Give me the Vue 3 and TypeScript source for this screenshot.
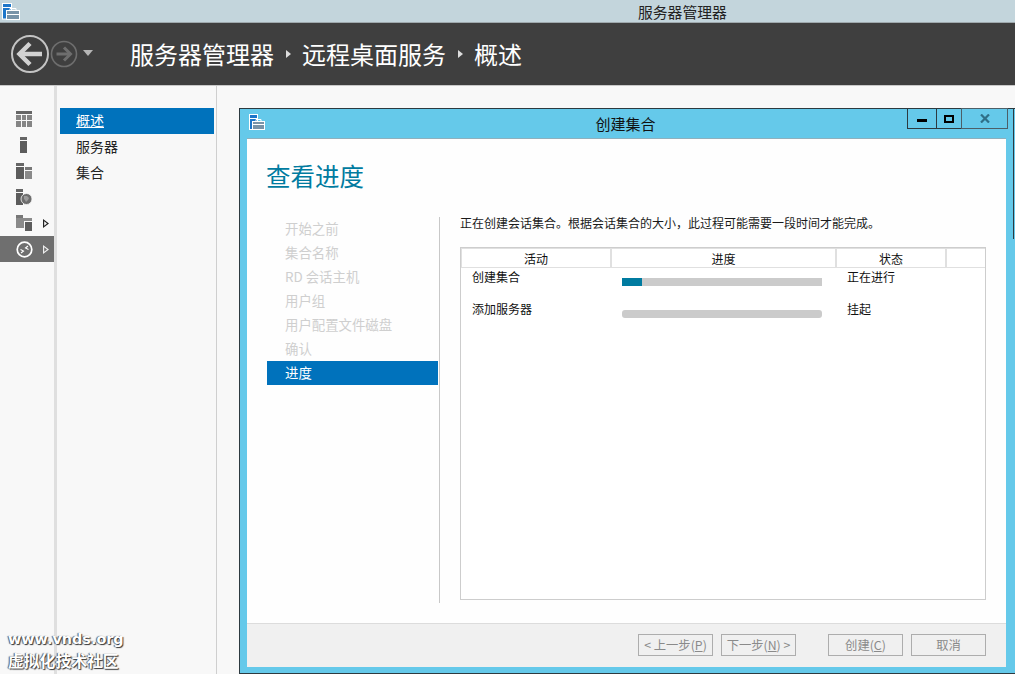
<script setup lang="ts">
const steps = ['开始之前', '集合名称', 'RD 会话主机', '用户组', '用户配置文件磁盘', '确认']
const rows = [
  { name: '创建集合', value: 10, state: '正在进行' },
  { name: '添加服务器', value: 0, state: '挂起' },
]
</script>

<template>
  <div class="app">
    <div class="titlebar">
      <svg class="appicon" width="18" height="17" viewBox="0 0 18 17">
        <rect x="0.500" y="0.500" width="9" height="15.500" fill="#1d76c9" stroke="#fff" />
        <rect x="1" y="4" width="8" height="1" fill="#fff" />
        <rect x="4.500" y="7.500" width="13" height="9" fill="#7893a8" stroke="#fff" />
        <path d="M8 7.500V5.500h6v2" fill="none" stroke="#fff" />
        <rect x="5" y="11" width="12" height="1" fill="#fff" />
      </svg>
      <span class="wintitle">服务器管理器</span>
    </div>

    <header class="header">
      <div class="navbtns">
        <svg class="back" width="40" height="40" viewBox="0 0 40 40">
          <circle cx="20" cy="20" r="18" fill="none" stroke="#c4c4c4" stroke-width="2" />
          <path d="M10 20h22" stroke="#d2d2d2" stroke-width="4.500" />
          <path d="M20 9.500 9.500 20 20 30.500" fill="none" stroke="#d2d2d2" stroke-width="4.500" />
        </svg>
        <svg class="fwd" width="28" height="28" viewBox="0 0 28 28">
          <circle cx="14" cy="14" r="12.500" fill="none" stroke="#6e6e6e" stroke-width="1.600" />
          <path d="M6.500 14h13" stroke="#6e6e6e" stroke-width="3" />
          <path d="M14 7.500l6.500 6.500-6.500 6.500" fill="none" stroke="#6e6e6e" stroke-width="3" />
        </svg>
        <span class="caret"></span>
      </div>
      <nav class="crumbs">
        <span>服务器管理器</span><i></i><span>远程桌面服务</span><i></i><span>概述</span>
      </nav>
    </header>

    <div class="body">
      <aside class="rail">
        <div class="railitem">
          <svg width="16" height="16" viewBox="0 0 16 16">
            <rect width="16" height="3" fill="#666" />
            <path d="M0 4h5v5H0zM6 4h4v5H6zM11 4h5v5h-5zM0 10h5v6H0zM6 10h4v6H6zM11 10h5v6h-5z" fill="#858585" />
          </svg>
        </div>
        <div class="railitem">
          <svg width="16" height="16" viewBox="0 0 16 16">
            <rect x="4" y="0" width="7" height="3" fill="#666" />
            <rect x="4" y="4" width="7" height="12" fill="#5c5c5c" />
          </svg>
        </div>
        <div class="railitem">
          <svg width="16" height="16" viewBox="0 0 16 16">
            <rect width="8" height="3" fill="#666" />
            <rect y="4" width="8" height="12" fill="#5c5c5c" />
            <rect x="9" y="4" width="7" height="3" fill="#777" />
            <rect x="9" y="8" width="7" height="8" fill="#8a8a8a" />
          </svg>
        </div>
        <div class="railitem">
          <svg width="16" height="16" viewBox="0 0 16 16">
            <rect width="7" height="3" fill="#666" />
            <rect y="4" width="7" height="12" fill="#5c5c5c" />
            <circle cx="10.500" cy="10" r="5.500" fill="#6d6d6d" stroke="#f8f8f8" stroke-width=".8" />
            <path d="M8 7h3l2 2-1 2-2 2-1-2-1-1z" fill="#9a9a9a" />
          </svg>
        </div>
        <div class="railitem has-arrow">
          <svg width="16" height="16" viewBox="0 0 16 16">
            <rect width="7" height="3" fill="#777" />
            <rect y="3" width="16" height="10" fill="#8a8a8a" />
            <rect x="8.500" y="6.500" width="8" height="10" fill="#5c5c5c" stroke="#f8f8f8" />
          </svg>
          <span class="tri"></span>
        </div>
        <div class="railitem has-arrow active">
          <svg width="17" height="17" viewBox="0 0 17 17">
            <circle cx="8.500" cy="8.500" r="7.300" fill="none" stroke="#fff" stroke-width="1.700" />
            <path d="M4.500 8.500 7.500 10 5 12M12.500 8.500 9.500 7 12 5" fill="none" stroke="#fff" stroke-width="1.100" />
          </svg>
          <span class="tri"></span>
        </div>
      </aside>

      <div class="splitter"></div>

      <nav class="subnav">
        <div class="subitem current"><u>概述</u></div>
        <div class="subitem">服务器</div>
        <div class="subitem">集合</div>
      </nav>

      <main class="content">
        <section class="dialog">
          <div class="dlgbar">
            <svg class="dlgicon" width="16" height="16" viewBox="0 0 16 16">
              <rect x="0.500" y="0.500" width="8" height="15" fill="#1d76c9" stroke="#fff" />
              <rect x="1" y="4" width="7" height="1" fill="#fff" />
              <rect x="3.500" y="7.500" width="12" height="8" fill="#7893a8" stroke="#fff" />
              <path d="M7 7.500V5.500h5v2" fill="none" stroke="#fff" />
              <rect x="4" y="10" width="11" height="1" fill="#fff" />
            </svg>
            <span class="dlgtitle">创建集合</span>
            <div class="winbtns">
              <button class="wb min"><span></span></button>
              <button class="wb max"><span></span></button>
              <button class="wb close">
                <svg width="10" height="9" viewBox="0 0 10 9"><path d="M1 .5l8 8M9 .5l-8 8" stroke="#2f6f88" stroke-width="2.200" fill="none" /></svg>
              </button>
            </div>
          </div>

          <div class="dlgbody">
            <div class="dlgmain">
              <h1 class="heading">查看进度</h1>
              <div class="columns">
                <ul class="steps">
                  <li v-for="s in steps" :key="s">{{ s }}</li>
                  <li class="on">进度</li>
                </ul>
                <div class="panel">
                  <p class="desc">正在创建会话集合。根据会话集合的大小，此过程可能需要一段时间才能完成。</p>
                  <div class="grid">
                    <div class="ghead">
                      <span class="c1">活动</span>
                      <span class="c2">进度</span>
                      <span class="c3">状态</span>
                      <span class="c4"></span>
                    </div>
                    <div v-for="r in rows" :key="r.name" class="grow">
                      <span class="c1 cell">{{ r.name }}</span>
                      <span class="c2 cell">
                        <span class="bar" :class="{ round: r.value === 0 }">
                          <span class="fill" :style="{ width: r.value + '%' }"></span>
                        </span>
                      </span>
                      <span class="c3 cell">{{ r.state }}</span>
                    </div>
                  </div>
                </div>
              </div>
            </div>
            <footer class="dlgfoot">
              <button class="btn">&lt;&nbsp;上一步(<u>P</u>)</button>
              <button class="btn next">下一步(<u>N</u>)&nbsp;&gt;</button>
              <button class="btn create">创建(<u>C</u>)</button>
              <button class="btn cancel">取消</button>
            </footer>
          </div>
        </section>
      </main>
    </div>

    <div class="watermark">
      <div class="wm1">www.vnds.org</div>
      <div class="wm2">虚拟化技术社区</div>
    </div>
  </div>
</template>

<style>
html, body { margin: 0; padding: 0; background: #f8f8f8; overflow: hidden; }
</style>

<style scoped>
.app {
  position: relative;
  width: 1015px;
  height: 674px;
  overflow: hidden;
  display: flex;
  flex-direction: column;
  font-family: "Noto Sans CJK SC", "Liberation Sans", sans-serif;
  font-size: 12px;
  color: #111;
  background: #f8f8f8;
}
.titlebar {
  height: 22px;
  flex: none;
  background: #c3d5dc;
  border-bottom: 1px solid #9fa9ad;
  position: relative;
}
.appicon { display: block; margin: 3px 0 0 2px; }
.wintitle {
  position: absolute;
  left: 638px;
  top: 1px;
  font-size: 14.800px;
  line-height: 21px;
  color: #222;
}
.header {
  height: 62px;
  flex: none;
  background: #3f3f3f;
  border-bottom: 1px solid #c9c9c9;
  display: flex;
  align-items: center;
}
.navbtns {
  width: 130px;
  flex: none;
  display: flex;
  align-items: center;
  padding-left: 10px;
  box-sizing: border-box;
}
.caret {
  margin-left: 5px;
  margin-top: -2px;
  width: 0;
  height: 0;
  border-left: 5px solid transparent;
  border-right: 5px solid transparent;
  border-top: 6px solid #b5b5b5;
}
.crumbs {
  display: flex;
  align-items: center;
  color: #fff;
  font-size: 24px;
  line-height: 32px;
}
.crumbs i {
  width: 0;
  height: 0;
  margin: 0 11px 0 12px;
  border-top: 4px solid transparent;
  border-bottom: 4px solid transparent;
  border-left: 5px solid #ddd;
}
.body { flex: 1; display: flex; min-height: 0; }
.rail {
  width: 54px;
  flex: none;
  padding-top: 20px;
  box-sizing: border-box;
}
.railitem {
  height: 26px;
  position: relative;
  display: flex;
  align-items: center;
  padding-left: 16px;
}
.railitem.active { background: #6f6f6f; }
.tri {
  position: absolute;
  left: 43px;
  top: 9px;
  width: 6px;
  height: 9px;
  clip-path: polygon(0 0, 100% 50%, 0 100%);
  background: #222;
}
.tri::after {
  content: "";
  position: absolute;
  left: 1.200px;
  top: 2.200px;
  width: 2.800px;
  height: 4.600px;
  background: #f8f8f8;
  clip-path: polygon(0 0, 100% 50%, 0 100%);
}
.active .tri { background: #eee; }
.active .tri::after { background: #6f6f6f; }
.splitter { width: 3px; flex: none; background: #dfdfdf; }
.subnav {
  width: 160px;
  flex: none;
  padding-top: 22px;
  padding-left: 3px;
  box-sizing: border-box;
  border-right: 1px solid #cfcfcf;
  font-size: 14px;
}
.subitem {
  width: 154px;
  height: 26px;
  line-height: 25px;
  padding-left: 16px;
  box-sizing: border-box;
  color: #222;
}
.subitem.current { background: #0072bc; color: #fff; }
.content { flex: 1; padding: 22px 0 0 22px; min-width: 0; }
.dialog {
  position: relative;
  width: 776px;
  height: 566px;
  box-sizing: border-box;
  background: #65c9ea;
  border: 1px solid #2d3a40;
  border-right: 0;
  display: flex;
  flex-direction: column;
}
.dialog::after {
  content: "";
  position: absolute;
  right: 1px;
  top: 0;
  width: 1px;
  height: 130px;
  background: #2d3a40;
}
.dlgbar {
  height: 29px;
  flex: none;
  position: relative;
  display: flex;
  align-items: center;
  justify-content: center;
}
.dlgicon { position: absolute; left: 9px; top: 5px; }
.dlgtitle { font-size: 15px; color: #111; margin-left: -4px; }
.winbtns {
  position: absolute;
  top: -1px;
  left: 667px;
  display: flex;
  height: 21px;
}
.wb {
  padding: 0;
  margin: 0 0 0 -1px;
  height: 21px;
  box-sizing: border-box;
  background: transparent;
  border: 1px solid #2d3a40;
  display: flex;
  align-items: center;
  justify-content: center;
}
.wb.min { width: 30px; margin-left: 0; }
.wb.min span { width: 10px; height: 3px; background: #000; margin-top: 3px; }
.wb.max { width: 26px; }
.wb.max span { box-sizing: content-box; width: 6px; height: 4px; border: 2px solid #000; }
.wb.close { width: 47px; border-color: #4c5f68; }
.dlgbody {
  margin: 0 9px 6px 7px;
  flex: 1;
  min-height: 0;
  background: #fefefe;
  border-top: 1px solid #8fb0bd;
  display: flex;
  flex-direction: column;
}
.dlgmain { flex: 1; min-height: 0; padding: 0 20px; }
.heading {
  margin: 0 0 0 -1px;
  padding-top: 19px;
  height: 59px;
  font-weight: 400;
  font-size: 24.500px;
  line-height: 36px;
  color: #007ba0;
}
.columns { display: flex; }
.steps {
  list-style: none;
  margin: 0;
  padding: 0;
  width: 172px;
  height: 386px;
  flex: none;
}
.steps li {
  width: 171px;
  height: 24px;
  line-height: 22px;
  padding-left: 18px;
  box-sizing: border-box;
  color: #cfcfcf;
  font-size: 13.400px;
}
.steps li.on { background: #0072bc; color: #fff; }
.panel {
  flex: 1;
  min-width: 0;
  border-left: 1px solid #c8c8c8;
  padding-left: 20px;
}
.desc { margin: 0; height: 30px; line-height: 12px; color: #1a1a1a; font-size: 12px; }
.grid {
  width: 526px;
  height: 353px;
  box-sizing: border-box;
  border: 1px solid #cdcdcd;
  background: #fff;
  overflow: hidden;
}
.ghead {
  display: flex;
  height: 20px;
  box-sizing: border-box;
  border-bottom: 1px solid #e0e0e0;
  text-align: center;
  line-height: 19px;
  border-top: 1px solid #e0e0e0;
  border-left: 1px solid #e0e0e0;
}
.ghead span { border-right: 2px solid #e0e0e0; box-sizing: border-box; }
.c1 { width: 150px; flex: none; }
.c2 { width: 225px; flex: none; }
.c3 { width: 110px; flex: none; }
.c4 { flex: 1; border-right: 0 !important; }
.grow { display: flex; height: 32px; }
.cell { display: block; margin-top: -1px; line-height: 20px; padding-left: 11px; box-sizing: border-box; }
.bar {
  display: block;
  width: 200px;
  height: 8px;
  margin-top: 11px;
  background: #cbcbcb;
}
.bar.round { border-radius: 3px; }
.fill { display: block; height: 100%; background: #007ba0; }
.dlgfoot {
  height: 44px;
  box-sizing: border-box;
  flex: none;
  background: #f0f0f0;
  border-top: 1px solid #dcdcdc;
  display: flex;
  align-items: flex-start;
  padding: 10px 0 0 391px;
  gap: 8px;
}
.btn {
  width: 75px;
  height: 22px;
  padding: 0;
  background: #f0f0f0;
  border: 1px solid #adadad;
  font: inherit;
  font-size: 12.300px;
  color: #8a8a8a;
  line-height: 20px;
  white-space: nowrap;
}
.create { margin-left: 24px; }
.watermark {
  position: absolute;
  left: 8px;
  top: 628px;
  color: #fff;
  text-shadow: 1px 1px 1px #333, -1px 0 1px #555;
  font-weight: 700;
}
.wm1 { font-family: "DejaVu Sans", sans-serif; font-size: 14.400px; line-height: 22px; }
.wm2 { font-size: 15.800px; line-height: 22px; }
</style>
